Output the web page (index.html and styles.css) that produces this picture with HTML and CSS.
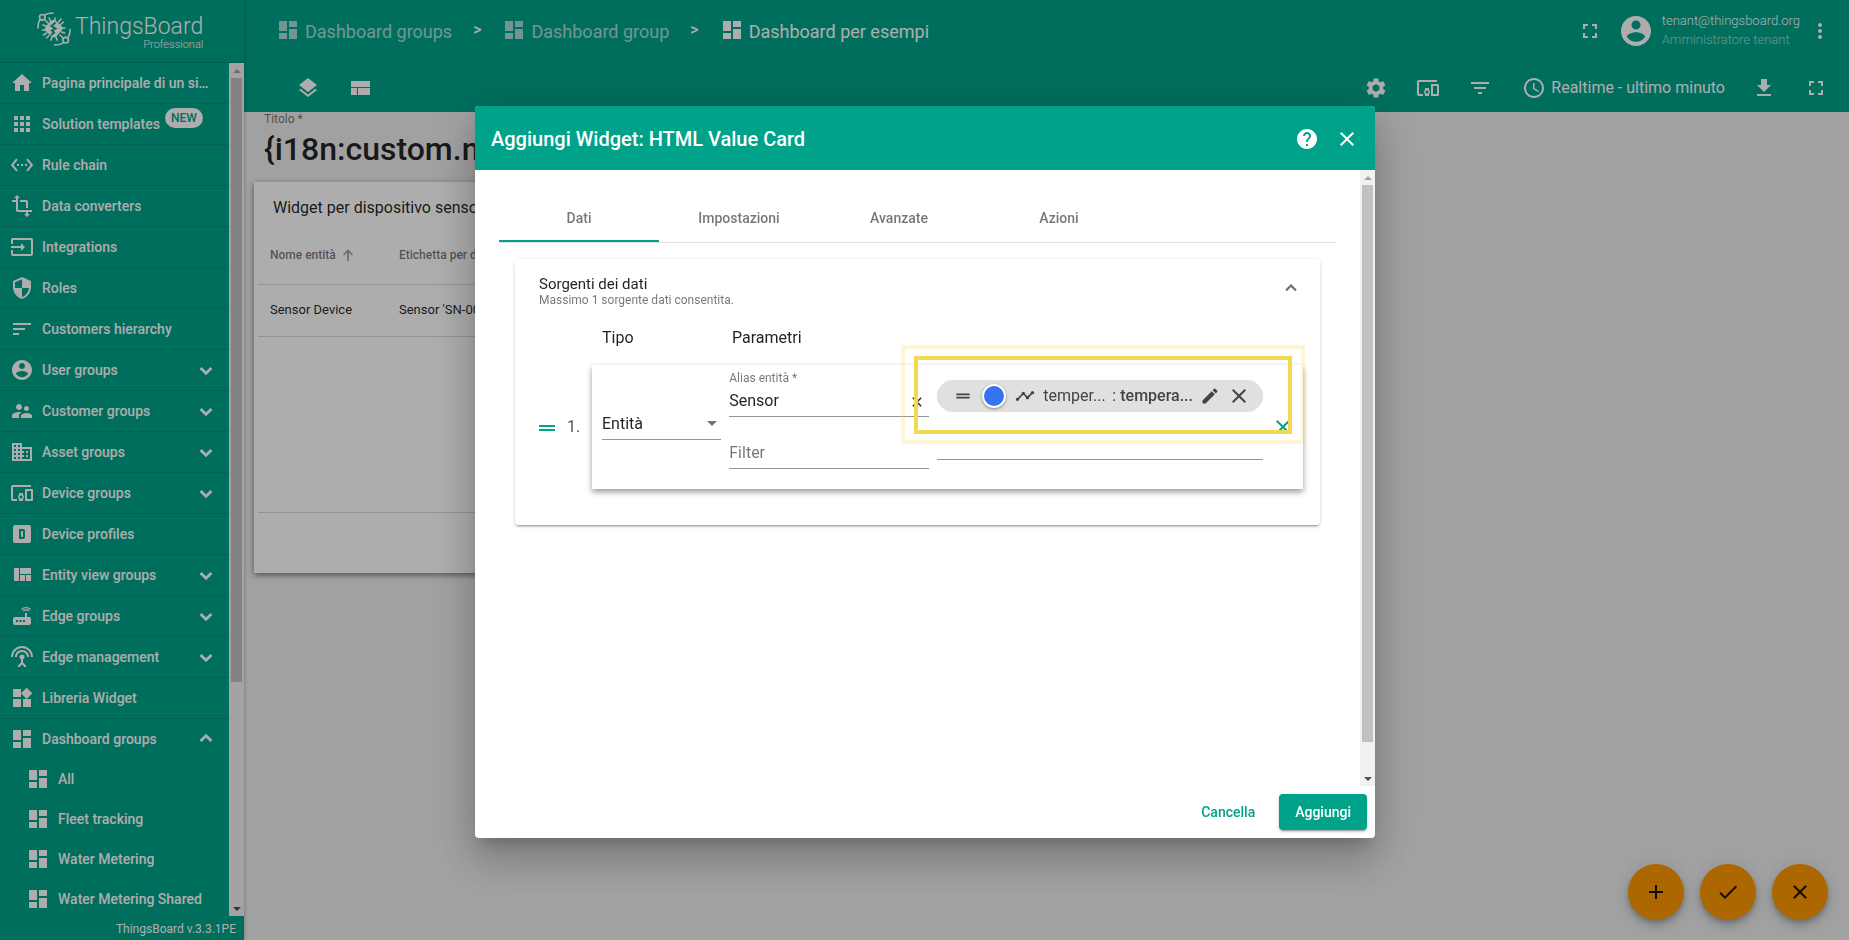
FILE: index.html
```html
<!DOCTYPE html>
<html lang="it">
<head>
<meta charset="utf-8">
<meta name="viewport" content="width=device-width, initial-scale=1">
<title>ThingsBoard - Dashboard per esempi</title>
<link rel="stylesheet" href="styles.css">
</head>
<body>
<svg class="sprite" aria-hidden="true">
<symbol id="home" viewBox="0 0 24 24"><path d="M10 20v-6h4v6h5v-8h3L12 3 2 12h3v8z"/></symbol>
<symbol id="apps" viewBox="0 0 24 24"><path d="M4 8h4V4H4v4zm6 12h4v-4h-4v4zm-6 0h4v-4H4v4zm0-6h4v-4H4v4zm6 0h4v-4h-4v4zm6-10v4h4V4h-4zm-6 4h4V4h-4v4zm6 6h4v-4h-4v4zm0 6h4v-4h-4v4z"/></symbol>
<symbol id="chain" viewBox="0 0 24 24"><path d="M7.77 6.76L6.23 5.48.82 12l5.41 6.52 1.54-1.28L3.42 12l4.35-5.24zM7 13h2v-2H7v2zm10-2h-2v2h2v-2zm-6 2h2v-2h-2v2zm6.77-7.52l-1.54 1.28L20.58 12l-4.35 5.24 1.54 1.28L23.18 12l-5.41-6.52z"/></symbol>
<symbol id="transform" viewBox="0 0 24 24"><path d="M22 18v-2H8V4h2L7 1 4 4h2v2H2v2h4v8c0 1.1.9 2 2 2h8v2h-2l3 3 3-3h-2v-2h4zM10 8h6v6h2V8c0-1.1-.9-2-2-2h-6v2z"/></symbol>
<symbol id="input" viewBox="0 0 24 24"><path d="M21 3.01H3c-1.1 0-2 .9-2 2V9h2V4.99h18v14.03H3V15H1v4.01c0 1.1.9 1.98 2 1.98h18c1.1 0 2-.88 2-1.98v-14c0-1.11-.9-2-2-2zM11 16l4-4-4-4v3H1v2h10v3z"/></symbol>
<symbol id="security" viewBox="0 0 24 24"><path d="M12 1L3 5v6c0 5.55 3.84 10.74 9 12 5.16-1.26 9-6.45 9-12V5l-9-4zm0 10.99h7c-.53 4.12-3.28 7.79-7 8.94V12H5V6.3l7-3.11v8.8z"/></symbol>
<symbol id="sort" viewBox="0 0 24 24"><path d="M3 18h6v-2H3v2zM3 6v2h18V6H3zm0 7h12v-2H3v2z"/></symbol>
<symbol id="account" viewBox="0 0 24 24"><path d="M12 2C6.48 2 2 6.48 2 12s4.48 10 10 10 10-4.48 10-10S17.52 2 12 2zm0 3c1.66 0 3 1.34 3 3s-1.34 3-3 3-3-1.34-3-3 1.34-3 3-3zm0 14.2c-2.5 0-4.71-1.28-6-3.22.03-1.99 4-3.08 6-3.08 1.99 0 5.97 1.09 6 3.08-1.29 1.94-3.5 3.22-6 3.22z"/></symbol>
<symbol id="people" viewBox="0 0 24 24"><path d="M16.5 12c1.38 0 2.49-1.12 2.49-2.5S17.88 7 16.5 7C15.12 7 14 8.12 14 9.5s1.12 2.5 2.5 2.5zM9 11c1.66 0 2.99-1.34 2.99-3S10.66 5 9 5C7.34 5 6 6.34 6 8s1.34 3 3 3zm7.5 3c-1.83 0-5.5.92-5.5 2.75V19h11v-2.25c0-1.83-3.67-2.75-5.5-2.75zM9 13c-2.33 0-7 1.17-7 3.5V19h7v-2.25c0-.85.33-2.34 2.37-3.47C10.5 13.1 9.66 13 9 13z"/></symbol>
<symbol id="domain" viewBox="0 0 24 24"><path d="M12 7V3H2v18h20V7H12zM6 19H4v-2h2v2zm0-4H4v-2h2v2zm0-4H4V9h2v2zm0-4H4V5h2v2zm4 12H8v-2h2v2zm0-4H8v-2h2v2zm0-4H8V9h2v2zm0-4H8V5h2v2zm10 12h-8v-2h2v-2h-2v-2h2v-2h-2V9h8v10zm-2-8h-2v2h2v-2zm0 4h-2v2h2v-2z"/></symbol>
<symbol id="devices" viewBox="0 0 24 24"><path d="M3 6h18V4H3c-1.1 0-2 .9-2 2v12c0 1.1.9 2 2 2h4v-2H3V6zm10 6H9v1.78c-.61.55-1 1.33-1 2.22s.39 1.67 1 2.22V20h4v-1.78c.61-.55 1-1.34 1-2.22s-.39-1.67-1-2.22V12zm-2 5.5c-.83 0-1.5-.67-1.5-1.5s.67-1.5 1.5-1.5 1.5.67 1.5 1.5-.67 1.5-1.5 1.5zM22 8h-6c-.5 0-1 .5-1 1v10c0 .5.5 1 1 1h6c.5 0 1-.5 1-1V9c0-.5-.5-1-1-1zm-1 10h-4v-8h4v8z"/></symbol>
<symbol id="profile" viewBox="0 0 24 24"><path fill-rule="evenodd" d="M9 7h4a2 2 0 0 1 2 2v6a2 2 0 0 1-2 2H9V7m2 2v6h2V9h-2M5 3h14a2 2 0 0 1 2 2v14a2 2 0 0 1-2 2H5a2 2 0 0 1-2-2V5a2 2 0 0 1 2-2z"/></symbol>
<symbol id="quilt" viewBox="0 0 24 24"><path d="M10 18h5v-6h-5v6zm-6 0h5V5H4v13zm12 0h5v-6h-5v6zM10 5v6h11V5H10z"/></symbol>
<symbol id="router" viewBox="0 0 24 24"><path d="M20.2 5.9l.8-.8C19.6 3.7 17.8 3 16 3s-3.6.7-5 2.1l.8.8C13 4.8 14.5 4.2 16 4.2s3 .6 4.2 1.7zm-.9.8c-.9-.9-2.1-1.4-3.3-1.4s-2.4.5-3.3 1.4l.8.8c.7-.7 1.6-1 2.5-1 .9 0 1.8.3 2.5 1l.8-.8zM19 13h-2V9h-2v4H5c-1.1 0-2 .9-2 2v4c0 1.1.9 2 2 2h14c1.1 0 2-.9 2-2v-4c0-1.1-.9-2-2-2zM8 18H6v-2h2v2zm3.5 0h-2v-2h2v2zm3.5 0h-2v-2h2v2z"/></symbol>
<symbol id="antenna" viewBox="0 0 24 24"><path d="M12 5c-3.87 0-7 3.13-7 7h2c0-2.76 2.24-5 5-5s5 2.24 5 5h2c0-3.87-3.13-7-7-7zm1 9.29c.88-.39 1.5-1.26 1.5-2.29 0-1.38-1.12-2.5-2.5-2.5S9.5 10.62 9.5 12c0 1.02.62 1.9 1.5 2.29v3.3L7.59 21 9 22.41l3-3 3 3L16.41 21 13 17.59v-3.3zM12 1C5.93 1 1 5.93 1 12h2c0-4.97 4.03-9 9-9s9 4.03 9 9h2c0-6.07-4.93-11-11-11z"/></symbol>
<symbol id="widgets" viewBox="0 0 24 24"><path d="M13 13v8h8v-8h-8zM3 21h8v-8H3v8zM3 3v8h8V3H3zm13.66-1.31L11 7.34 16.66 13l5.66-5.66-5.66-5.65z"/></symbol>
<symbol id="dashboard" viewBox="0 0 24 24"><path d="M3 13h8V3H3v10zm0 8h8v-6H3v6zm10 0h8V11h-8v10zm0-18v6h8V3h-8z"/></symbol>
<symbol id="layers" viewBox="0 0 24 24"><path d="M11.99 18.54l-7.37-5.73L3 14.07l9 7 9-7-1.63-1.27-7.38 5.74zM12 16l7.36-5.73L21 9l-9-7-9 7 1.63 1.27L12 16z"/></symbol>
<symbol id="compact" viewBox="0 0 24 24"><path d="M3 19h6v-7H3v7zm7 0h12v-7H10v7zM3 5v6h19V5H3z"/></symbol>
<symbol id="settings" viewBox="0 0 24 24"><path d="M19.14 12.94c.04-.3.06-.61.06-.94 0-.32-.02-.64-.07-.94l2.03-1.58c.18-.14.23-.41.12-.61l-1.92-3.32c-.12-.22-.37-.29-.59-.22l-2.39.96c-.5-.38-1.03-.7-1.62-.94l-.36-2.54c-.04-.24-.24-.41-.48-.41h-3.84c-.24 0-.43.17-.47.41l-.36 2.54c-.59.24-1.13.57-1.62.94l-2.39-.96c-.22-.08-.47 0-.59.22L2.74 8.87c-.12.21-.08.47.12.61l2.03 1.58c-.05.3-.09.63-.09.94s.02.64.07.94l-2.03 1.58c-.18.14-.23.41-.12.61l1.92 3.32c.12.22.37.29.59.22l2.39-.96c.5.38 1.03.7 1.62.94l.36 2.54c.05.24.24.41.48.41h3.84c.24 0 .44-.17.47-.41l.36-2.54c.59-.24 1.13-.56 1.62-.94l2.39.96c.22.08.47 0 .59-.22l1.92-3.32c.12-.22.07-.47-.12-.61l-2.01-1.58zM12 15.6c-1.98 0-3.6-1.62-3.6-3.6s1.62-3.6 3.6-3.6 3.6 1.62 3.6 3.6-1.62 3.6-3.6 3.6z"/></symbol>
<symbol id="filter" viewBox="0 0 24 24"><path d="M10 18h4v-2h-4v2zM3 6v2h18V6H3zm3 7h12v-2H6v2z"/></symbol>
<symbol id="clock" viewBox="0 0 24 24"><path d="M11.99 2C6.47 2 2 6.48 2 12s4.47 10 9.99 10C17.52 22 22 17.52 22 12S17.52 2 11.99 2zM12 20c-4.42 0-8-3.58-8-8s3.58-8 8-8 8 3.58 8 8-3.58 8-8 8zm.5-13H11v6l5.25 3.15.75-1.23-4.5-2.67z"/></symbol>
<symbol id="download" viewBox="0 0 24 24"><path d="M19 9h-4V3H9v6H5l7 7 7-7zM5 18v2h14v-2H5z"/></symbol>
<symbol id="fullscreen" viewBox="0 0 24 24"><path d="M7 14H5v5h5v-2H7v-3zm-2-4h2V7h3V5H5v5zm12 7h-3v2h5v-5h-2v3zM14 5v2h3v3h2V5h-5z"/></symbol>
<symbol id="more" viewBox="0 0 24 24"><path d="M12 8c1.1 0 2-.9 2-2s-.9-2-2-2-2 .9-2 2 .9 2 2 2zm0 2c-1.1 0-2 .9-2 2s.9 2 2 2 2-.9 2-2-.9-2-2-2zm0 6c-1.1 0-2 .9-2 2s.9 2 2 2 2-.9 2-2-.9-2-2-2z"/></symbol>
<symbol id="help" viewBox="0 0 24 24"><path d="M12 2C6.48 2 2 6.48 2 12s4.48 10 10 10 10-4.48 10-10S17.52 2 12 2zm1 17h-2v-2h2v2zm2.07-7.75l-.9.92C13.45 12.9 13 13.5 13 15h-2v-.5c0-1.1.45-2.1 1.17-2.83l1.24-1.26c.37-.36.59-.86.59-1.41 0-1.1-.9-2-2-2s-2 .9-2 2H8c0-2.21 1.79-4 4-4s4 1.79 4 4c0 .88-.36 1.68-.93 2.25z"/></symbol>
<symbol id="close" viewBox="0 0 24 24"><path d="M19 6.41L17.59 5 12 10.59 6.41 5 5 6.41 10.59 12 5 17.59 6.41 19 12 13.41 17.59 19 19 17.59 13.41 12z"/></symbol>
<symbol id="edit" viewBox="0 0 24 24"><path d="M3 17.25V21h3.75L17.81 9.94l-3.75-3.75L3 17.25zM20.71 7.04c.39-.39.39-1.02 0-1.41l-2.34-2.34c-.39-.39-1.02-.39-1.41 0l-1.83 1.83 3.75 3.75 1.83-1.83z"/></symbol>
<symbol id="timeline" viewBox="0 0 24 24"><path d="M23 8c0 1.1-.9 2-2 2-.18 0-.35-.02-.51-.07l-3.56 3.55c.05.16.07.34.07.52 0 1.1-.9 2-2 2s-2-.9-2-2c0-.18.02-.36.07-.52l-2.55-2.55c-.16.05-.34.07-.52.07s-.36-.02-.52-.07l-4.55 4.56c.05.16.07.33.07.51 0 1.1-.9 2-2 2s-2-.9-2-2 .9-2 2-2c.18 0 .35.02.51.07l4.56-4.55C8.02 9.36 8 9.18 8 9c0-1.1.9-2 2-2s2 .9 2 2c0 .18-.02.36-.07.52l2.55 2.55c.16-.05.34-.07.52-.07s.36.02.52.07l3.55-3.56C19.02 8.35 19 8.18 19 8c0-1.1.9-2 2-2s2 .9 2 2z"/></symbol>
<symbol id="drag" viewBox="0 0 24 24"><path d="M20 9H4v2h16V9zM4 15h16v-2H4v2z"/></symbol>
<symbol id="check" viewBox="0 0 24 24"><path d="M9 16.17L4.83 12l-1.42 1.41L9 19 21 7l-1.41-1.41z"/></symbol>
<symbol id="add" viewBox="0 0 24 24"><path d="M19 13h-6v6h-2v-6H5v-2h6V5h2v6h6v2z"/></symbol>
<symbol id="chevron" viewBox="0 0 24 24"><path d="M5.500 9.500l6.500 6.500 6.500-6.500" fill="none" stroke="currentColor" stroke-width="3.4"/></symbol>
<symbol id="up" viewBox="0 0 24 24"><path d="M6 15l6-6 6 6" fill="none" stroke="currentColor" stroke-width="2.6"/></symbol>
<symbol id="caret" viewBox="0 0 10 5"><path d="M0 0h10L5 5z"/></symbol>
<symbol id="arrow" viewBox="0 0 12 12"><path d="M6 12V2M1.500 6L6 1.500 10.500 6" fill="none" stroke="currentColor" stroke-width="1.700"/></symbol>
</svg>

<div class="app">
  <aside class="sidebar">
    <div class="brand">
      <svg class="brand-mark" viewBox="0 0 34 34" aria-hidden="true">
        <g fill="none" stroke="currentColor" stroke-width="1.600" stroke-linecap="round">
          <path d="M1 16C1 12 1.800 9 3.300 7.200M7.300 3.500C9.500 1.500 12.500 1 16 1M33 17.500c0 4-1 7-2.600 8.800M26.500 30.500c-2.500 2-5.500 2.500-9 2.500"/>
          <circle cx="5.300" cy="5.300" r="2.800"/><circle cx="28.700" cy="28.200" r="2.800"/>
          <path d="M11 11L8 8M23 23l3 3M13.500 9L12 6M18 8V6M21.500 10L24 7M23.500 12.500L26.500 10M25 16h3M24.500 20l3 1M9 14l-3-1M8 18H5.500M9.500 21l-3 2M12 23.500L9.500 26M15 25l-1 3M19 25l1 3"/>
        </g>
        <rect x="9.300" y="9.300" width="14.600" height="14.600" rx="4" transform="rotate(42 16.600 16.600)"/>
        <path class="brand-bolt" d="M18.500 10.500l-4 3.500 4 2.500-3.500 2 2 2-3 2.500" fill="none" stroke-width="2"/>
      </svg>
      <div class="brand-text"><span class="brand-name">ThingsBoard</span><span class="brand-edition">Professional</span></div>
    </div>
    <div class="side-body">
      <nav class="menu">
        <a class="item" href="#"><svg class="icon"><use href="#home"/></svg><span class="label">Pagina principale di un sistema</span></a>
        <a class="item" href="#"><svg class="icon"><use href="#apps"/></svg><span class="label">Solution templates</span><span class="badge">NEW</span></a>
        <a class="item" href="#"><svg class="icon"><use href="#chain"/></svg><span class="label">Rule chain</span></a>
        <a class="item" href="#"><svg class="icon"><use href="#transform"/></svg><span class="label">Data converters</span></a>
        <a class="item" href="#"><svg class="icon"><use href="#input"/></svg><span class="label">Integrations</span></a>
        <a class="item" href="#"><svg class="icon"><use href="#security"/></svg><span class="label">Roles</span></a>
        <a class="item" href="#"><svg class="icon"><use href="#sort"/></svg><span class="label">Customers hierarchy</span></a>
        <a class="item" href="#"><svg class="icon"><use href="#account"/></svg><span class="label">User groups</span><svg class="toggle"><use href="#chevron"/></svg></a>
        <a class="item" href="#"><svg class="icon"><use href="#people"/></svg><span class="label">Customer groups</span><svg class="toggle"><use href="#chevron"/></svg></a>
        <a class="item" href="#"><svg class="icon"><use href="#domain"/></svg><span class="label">Asset groups</span><svg class="toggle"><use href="#chevron"/></svg></a>
        <a class="item" href="#"><svg class="icon"><use href="#devices"/></svg><span class="label">Device groups</span><svg class="toggle"><use href="#chevron"/></svg></a>
        <a class="item" href="#"><svg class="icon"><use href="#profile"/></svg><span class="label">Device profiles</span></a>
        <a class="item" href="#"><svg class="icon"><use href="#quilt"/></svg><span class="label">Entity view groups</span><svg class="toggle"><use href="#chevron"/></svg></a>
        <a class="item" href="#"><svg class="icon"><use href="#router"/></svg><span class="label">Edge groups</span><svg class="toggle"><use href="#chevron"/></svg></a>
        <a class="item" href="#"><svg class="icon"><use href="#antenna"/></svg><span class="label">Edge management</span><svg class="toggle"><use href="#chevron"/></svg></a>
        <a class="item" href="#"><svg class="icon"><use href="#widgets"/></svg><span class="label">Libreria Widget</span></a>
        <a class="item open" href="#"><svg class="icon"><use href="#dashboard"/></svg><span class="label">Dashboard groups</span><svg class="toggle flip"><use href="#chevron"/></svg></a>
        <a class="item sub" href="#"><svg class="icon"><use href="#dashboard"/></svg><span class="label">All</span></a>
        <a class="item sub" href="#"><svg class="icon"><use href="#dashboard"/></svg><span class="label">Fleet tracking</span></a>
        <a class="item sub" href="#"><svg class="icon"><use href="#dashboard"/></svg><span class="label">Water Metering</span></a>
        <a class="item sub" href="#"><svg class="icon"><use href="#dashboard"/></svg><span class="label">Water Metering Shared</span></a>
      </nav>
      <div class="scrollbar" aria-hidden="true"><span class="sb-up"></span><div class="sb-track"><div class="sb-thumb side-thumb"></div></div><span class="sb-down"></span></div>
    </div>
    <div class="version">ThingsBoard v.3.3.1PE</div>
  </aside>

  <div class="page">
    <header class="topbar">
      <nav class="crumbs" aria-label="Breadcrumb">
        <a class="crumb" href="#"><svg class="icon"><use href="#dashboard"/></svg>Dashboard groups</a><span class="sep">&gt;</span>
        <a class="crumb" href="#"><svg class="icon"><use href="#dashboard"/></svg>Dashboard group</a><span class="sep">&gt;</span>
        <a class="crumb current" href="#"><svg class="icon"><use href="#dashboard"/></svg>Dashboard per esempi</a>
      </nav>
      <div class="user-area">
        <button class="icon-btn" aria-label="Schermo intero"><svg class="icon"><use href="#fullscreen"/></svg></button>
        <svg class="avatar"><use href="#account"/></svg>
        <div class="user"><span class="user-mail">tenant@thingsboard.org</span><span class="user-role">Amministratore tenant</span></div>
        <button class="icon-btn menu-btn" aria-label="Menu utente"><svg class="icon"><use href="#more"/></svg></button>
      </div>
    </header>
    <div class="toolbar">
      <div class="tools">
        <button class="icon-btn" aria-label="Livelli"><svg class="icon"><use href="#layers"/></svg></button>
        <button class="icon-btn" aria-label="Layout"><svg class="icon"><use href="#compact"/></svg></button>
      </div>
      <div class="tools">
        <button class="icon-btn" aria-label="Impostazioni"><svg class="icon"><use href="#settings"/></svg></button>
        <button class="icon-btn" aria-label="Alias"><svg class="icon"><use href="#devices"/></svg></button>
        <button class="icon-btn" aria-label="Filtri"><svg class="icon"><use href="#filter"/></svg></button>
        <button class="time-btn"><svg class="icon"><use href="#clock"/></svg>Realtime - ultimo minuto</button>
        <button class="icon-btn" aria-label="Esporta"><svg class="icon"><use href="#download"/></svg></button>
        <button class="icon-btn" aria-label="Espandi"><svg class="icon"><use href="#fullscreen"/></svg></button>
      </div>
    </div>
    <main class="board">
      <div class="title-field">
        <label for="board-title">Titolo *</label>
        <input id="board-title" value="{i18n:custom.n">
      </div>
      <section class="widget">
        <h2>Widget per dispositivo sensore</h2>
        <table>
          <thead><tr><th>Nome entità<svg class="sort-arrow"><use href="#arrow"/></svg></th><th>Etichetta per dispositivo</th></tr></thead>
          <tbody><tr><td>Sensor Device</td><td>Sensor 'SN-001'</td></tr></tbody>
        </table>
        <div class="paginator"></div>
      </section>
    </main>
  </div>
</div>

<div class="fabs">
  <button class="fab" aria-label="Aggiungi widget"><svg class="icon"><use href="#add"/></svg></button>
  <button class="fab" aria-label="Applica"><svg class="icon"><use href="#check"/></svg></button>
  <button class="fab" aria-label="Annulla"><svg class="icon"><use href="#close"/></svg></button>
</div>

<div class="overlay">
  <div class="dialog" role="dialog" aria-labelledby="dialog-title">
    <div class="dialog-head">
      <h1 id="dialog-title">Aggiungi Widget: HTML Value Card</h1>
      <button class="icon-btn" aria-label="Aiuto"><svg class="icon"><use href="#help"/></svg></button>
      <button class="icon-btn" aria-label="Chiudi"><svg class="icon"><use href="#close"/></svg></button>
    </div>
    <div class="dialog-body">
      <div class="content">
        <div class="tabs" role="tablist">
          <button class="tab active" role="tab" aria-selected="true">Dati</button>
          <button class="tab" role="tab">Impostazioni</button>
          <button class="tab" role="tab">Avanzate</button>
          <button class="tab" role="tab">Azioni</button>
        </div>
        <section class="panel">
          <div class="panel-head">
            <div><h3>Sorgenti dei dati</h3><p>Massimo 1 sorgente dati consentita.</p></div>
            <svg class="panel-toggle"><use href="#up"/></svg>
          </div>
          <div class="col-heads"><span>Tipo</span><span>Parametri</span></div>
          <div class="source">
            <svg class="icon handle"><use href="#drag"/></svg>
            <span class="num">1.</span>
            <div class="source-card">
              <div class="type-field">
                <select aria-label="Tipo"><option>Entità</option></select>
                <svg class="caret"><use href="#caret"/></svg>
              </div>
              <div class="params">
                <div class="alias-field">
                  <label for="alias">Alias entità *</label>
                  <div class="line-input"><input id="alias" value="Sensor"><button class="clear" aria-label="Cancella alias"><svg><use href="#close"/></svg></button></div>
                </div>
                <input class="filter-input" placeholder="Filter" aria-label="Filter">
              </div>
              <div class="keys">
                <div class="chip">
                  <svg class="chip-drag"><use href="#drag"/></svg>
                  <span class="dot"></span>
                  <svg class="chip-line"><use href="#timeline"/></svg>
                  <span class="key">temper...</span><span class="colon">:</span><b class="key-label">tempera...</b>
                  <button class="chip-btn" aria-label="Modifica"><svg class="pencil"><use href="#edit"/></svg></button>
                  <button class="chip-btn" aria-label="Rimuovi"><svg class="icon"><use href="#close"/></svg></button>
                </div>
              </div>
              <button class="remove" aria-label="Rimuovi sorgente"><svg><use href="#close"/></svg></button>
              <div class="halo"></div>
              <div class="highlight"></div>
            </div>
          </div>
        </section>
      </div>
      <div class="scrollbar" aria-hidden="true"><span class="sb-up"></span><div class="sb-track"><div class="sb-thumb dialog-thumb"></div></div><span class="sb-down"></span></div>
    </div>
    <div class="dialog-foot">
      <button class="btn">Cancella</button>
      <button class="btn primary">Aggiungi</button>
    </div>
  </div>
</div>
</body>
</html>
```

FILE: styles.css
```css
:root {
  --green: #00a28a;
  --ink: rgba(0, 0, 0, 0.87);
  --muted: rgba(0, 0, 0, 0.54);
  --line: rgba(0, 0, 0, 0.42);
}

* { box-sizing: border-box; }

body {
  margin: 0;
  height: 100vh;
  overflow: hidden;
  background: #eee;
  color: var(--ink);
  font: 400 16px/24px Roboto, "Liberation Sans", sans-serif;
}

button, input, select { font: inherit; color: inherit; border: 0; padding: 0; background: none; outline: 0; }
a { color: inherit; text-decoration: none; }
h1, h2, h3, p { margin: 0; font-weight: 400; }
svg { fill: currentColor; flex: none; display: block; }
.sprite { position: absolute; width: 0; height: 0; }
.icon { width: 24px; height: 24px; }

.app { display: flex; height: 100vh; }

/* sidebar */
.sidebar {
  width: 244px;
  flex: none;
  display: flex;
  flex-direction: column;
  background: var(--green);
  color: #fff;
  box-shadow: 0 0 4px rgba(0, 0, 0, 0.3);
  position: relative;
  z-index: 1;
}
.brand {
  height: 63px;
  flex: none;
  display: flex;
  gap: 4px;
  padding: 12px 0 0 37px;
  border-bottom: 1px solid rgba(0, 0, 0, 0.15);
}
.brand-mark { width: 34px; height: 34px; }
.brand-bolt { stroke: var(--green); }
.brand-text { display: flex; flex-direction: column; align-items: flex-end; padding-top: 3px; }
.brand-name { font-size: 23px; font-weight: 300; line-height: 24px; }
.brand-edition { font-size: 11px; font-weight: 300; line-height: 12px; }
.side-body { flex: 1; min-height: 0; display: flex; }
.menu { flex: 1; min-width: 0; overflow: hidden; }
.item {
  display: flex;
  align-items: center;
  height: 41px;
  padding: 0 11px 0 10px;
  border-bottom: 1px solid rgba(0, 0, 0, 0.12);
  font-size: 14px;
  font-weight: 500;
}
.item.open, .item.sub { height: 40px; border-bottom: 0; }
.item.sub { padding-left: 26px; }
.item .label { margin-left: 8px; overflow: hidden; text-overflow: ellipsis; white-space: nowrap; }
.item:first-child { padding-right: 20px; }
.badge {
  align-self: flex-start;
  margin: 4px 0 0 5px;
  padding: 0 6px;
  border-radius: 10px;
  background: #fff;
  color: var(--green);
  font-size: 12px;
  line-height: 20px;
}
.toggle { width: 24px; height: 24px; padding: 2px; margin-left: auto; }
.flip { transform: rotate(180deg); }
.version { height: 24px; flex: none; padding-right: 8px; text-align: right; font-size: 12px; line-height: 26px; }

.scrollbar { width: 15px; flex: none; display: flex; flex-direction: column; background: #f1f1f1; }
.sb-up, .sb-down { height: 15px; flex: none; display: grid; place-items: center; }
.sb-up::after, .sb-down::after { content: ""; border: 4px solid transparent; }
.sb-up::after { border-top: 0; border-bottom-color: #a3a3a3; }
.sb-down::after { border-bottom: 0; border-top-color: #505050; }
.sb-track { flex: 1; padding: 0 2px; }
.sb-thumb { background: #c1c1c1; }
.side-thumb { height: 73.4%; }
.dialog-thumb { height: 95%; }

/* page */
.page { flex: 1; min-width: 0; display: flex; flex-direction: column; }
.topbar, .toolbar { display: flex; align-items: center; justify-content: space-between; background: var(--green); color: #fff; flex: none; }
.topbar { height: 64px; padding: 0 17px 2px 32px; }
.toolbar { height: 48px; padding: 0 13px 0 44px; }
.crumbs { display: flex; align-items: center; font-size: 18px; padding-top: 2px; }
.crumb { display: flex; align-items: center; gap: 5px; opacity: 0.65; white-space: nowrap; }
.crumb .icon { margin-bottom: 4px; }
.current { opacity: 1; }
.sep { margin: 0 21px 5px; font-size: 16px; font-weight: 500; }
.user-area { display: flex; align-items: center; font-size: 13px; }
.icon-btn { width: 40px; height: 40px; display: grid; place-items: center; }
.avatar { width: 36px; height: 36px; margin: 0 8px; }
.user { display: flex; flex-direction: column; font-weight: 300; line-height: 19px; margin-bottom: 2px; }
.user-role { opacity: 0.6; }
.menu-btn { margin-right: -8px; }
.tools { display: flex; align-items: center; gap: 12px; }
.time-btn { display: flex; align-items: center; gap: 5px; margin: 0 7px 0 10px; }

.board { padding: 0 10px; }
.title-field { padding-left: 10px; display: flex; flex-direction: column; }
.title-field label { font-size: 12px; line-height: 14px; color: var(--muted); }
.title-field input { width: 600px; height: 46px; font-size: 32px; font-weight: 500; }
.widget {
  width: 760px;
  margin-top: 10px;
  padding: 12px 4px 0;
  background: #fff;
  box-shadow: 0 2px 6px rgba(0, 0, 0, 0.5);
}
.widget h2 { font-size: 16px; line-height: 28px; padding-left: 15px; }
.widget table { width: 100%; border-collapse: collapse; font-size: 13px; }
.widget th { height: 62px; padding: 4px 12px 0; text-align: left; font-size: 12px; font-weight: 500; color: var(--muted); border-bottom: 1px solid rgba(0, 0, 0, 0.15); }
.widget th:first-child { width: 129px; }
.widget td { height: 52px; padding: 0 12px; border-bottom: 1px solid rgba(0, 0, 0, 0.15); }
.sort-arrow { width: 12px; height: 12px; display: inline-block; margin-left: 6px; vertical-align: -2px; opacity: 0.7; }
.paginator { margin-top: 175px; height: 61px; border-top: 1px solid rgba(0, 0, 0, 0.15); }

.fabs { position: fixed; right: 21px; bottom: 20px; display: flex; gap: 16px; }
.fab {
  width: 56px;
  height: 56px;
  border-radius: 50%;
  background: #ff9800;
  display: grid;
  place-items: center;
  box-shadow: 0 3px 5px -1px rgba(0, 0, 0, 0.2), 0 6px 10px rgba(0, 0, 0, 0.14), 0 1px 18px rgba(0, 0, 0, 0.12);
}

/* dialog */
.overlay {
  position: fixed;
  inset: 0;
  z-index: 10;
  display: flex;
  align-items: center;
  justify-content: center;
  padding: 4px 0 0 1px;
  background: rgba(0, 0, 0, 0.32);
}
.dialog {
  width: 900px;
  max-width: 80vw;
  height: calc(100vh - 208px);
  display: flex;
  flex-direction: column;
  overflow: hidden;
  border-radius: 4px;
  background: #fff;
  box-shadow: 0 11px 15px -7px rgba(0, 0, 0, 0.2), 0 24px 38px 3px rgba(0, 0, 0, 0.14), 0 9px 46px 8px rgba(0, 0, 0, 0.12);
}
.dialog-head { height: 64px; flex: none; display: flex; align-items: center; padding: 1px 8px 0 16px; background: var(--green); color: #fff; }
.dialog-head h1 { flex: 1; font-size: 20px; font-weight: 500; }
.dialog-body { flex: 1; min-height: 0; display: flex; }
.content { flex: 1; padding: 24px; overflow: hidden; }
.tabs { display: flex; border-bottom: 1px solid rgba(0, 0, 0, 0.12); }
.tab { width: 160px; height: 48px; color: var(--muted); font-size: 14px; font-weight: 500; }
.tab.active { box-shadow: inset 0 -2px var(--green); }
.panel {
  margin: 16px;
  padding: 15px 17px 36px 24px;
  border-radius: 4px;
  box-shadow: 0 3px 1px -2px rgba(0, 0, 0, 0.2), 0 2px 2px rgba(0, 0, 0, 0.14), 0 1px 5px rgba(0, 0, 0, 0.12);
}
.panel-head { display: flex; align-items: center; justify-content: space-between; height: 34px; }
.panel-head h3 { font-size: 15px; line-height: 18px; }
.panel-head p { font-size: 12px; line-height: 14px; color: var(--muted); }
.panel-toggle { width: 20px; height: 20px; margin: 0 2px 6px 0; color: #6f6f6f; }
.col-heads { display: flex; padding: 18px 0 15px 63px; }
.col-heads span { width: 130px; }
.source { display: flex; align-items: center; }
.handle { width: 24px; margin: 2px 4px 0 -4px; color: var(--green); }
.num { width: 29px; padding-left: 4px; color: rgba(0, 0, 0, 0.7); }
.source-card {
  position: relative;
  flex: 1;
  min-width: 0;
  height: 124px;
  display: flex;
  gap: 8px;
  padding: 0 8px 0 10px;
  box-shadow: 0 3px 6px rgba(0, 0, 0, 0.4);
}
.type-field { width: 120px; height: 32px; margin-top: 43px; display: flex; align-items: center; border-bottom: 1px solid var(--line); }
.type-field select { flex: 1; appearance: none; }
.caret { width: 10px; height: 5px; margin-right: 4px; color: var(--muted); }
.params { width: 200px; display: flex; flex-direction: column; }
.alias-field { padding-top: 5px; }
.alias-field label { display: block; font-size: 12px; line-height: 16px; color: var(--muted); }
.line-input { display: flex; align-items: center; height: 31px; border-bottom: 1px solid var(--line); }
.line-input input { flex: 1; min-width: 0; }
.clear svg { width: 16px; height: 16px; margin: 2px 4px 0 0; }
.filter-input { height: 32px; margin-top: 20px; border-bottom: 1px solid var(--line); }
.filter-input::placeholder { color: var(--muted); opacity: 1; }
.keys { flex: 1; height: 95px; padding-top: 15px; border-bottom: 1px solid var(--line); }
.chip { height: 32px; display: flex; align-items: center; padding: 0 12px 0 16px; border-radius: 16px; background: #e0e0e0; color: #444; }
.chip-drag { width: 20px; height: 20px; }
.dot { width: 24px; height: 24px; flex: none; margin-left: 9px; border: 2px solid #fff; border-radius: 50%; background: #3673f0; box-shadow: 0 1px 3px rgba(0, 0, 0, 0.4); }
.chip-line { width: 20px; height: 20px; margin: 0 8px 0 9px; }
.key { width: 69px; }
.colon { width: 8px; }
.key-label { flex: 1; font-weight: 500; }
.chip-btn { display: grid; place-items: center; margin-left: 7px; }
.pencil { width: 20px; height: 20px; }
.remove { width: 24px; color: var(--green); }
.remove svg { width: 24px; height: 24px; }
.halo, .highlight { position: absolute; pointer-events: none; }
.halo { inset: -20px -2px 45px 309px; border: 4px solid rgba(241, 217, 79, 0.24); }
.highlight { inset: -9px 11px 55px 322px; border: 4px solid #f2da50; }

.dialog-foot { flex: none; display: flex; justify-content: flex-end; gap: 8px; padding: 8px; }
.btn { height: 36px; padding: 0 16px; border-radius: 4px; color: var(--green); font-size: 14px; font-weight: 500; }
.primary { background: var(--green); color: #fff; box-shadow: 0 3px 1px -2px rgba(0, 0, 0, 0.2), 0 2px 2px rgba(0, 0, 0, 0.14), 0 1px 5px rgba(0, 0, 0, 0.12); }
```
